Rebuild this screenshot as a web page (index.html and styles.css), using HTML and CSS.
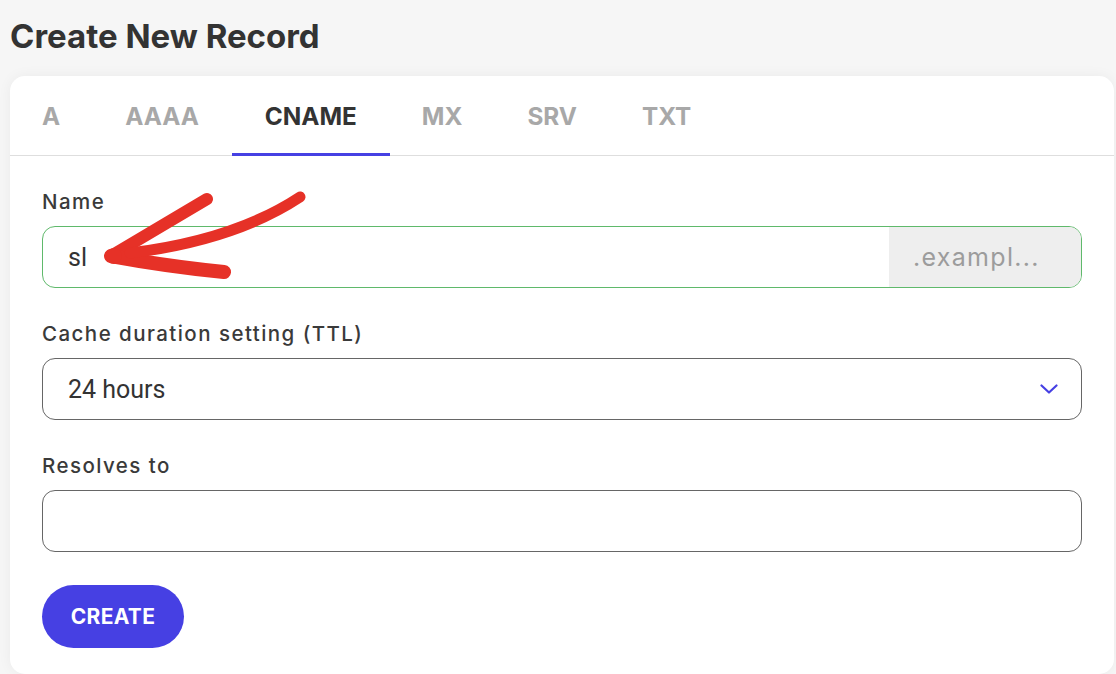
FILE: index.html
```html
<!DOCTYPE html>
<html lang="en">
<head>
<meta charset="utf-8">
<title>Create New Record</title>
<link rel="stylesheet" href="styles.css">
</head>
<body>
<main class="page">
  <h1 class="title">Create New Record</h1>
  <section class="card">
    <nav class="tabs">
      <div class="tab">A</div>
      <div class="tab">AAAA</div>
      <div class="tab active">CNAME</div>
      <div class="tab">MX</div>
      <div class="tab">SRV</div>
      <div class="tab">TXT</div>
    </nav>
    <form class="form">
      <div class="field">
        <label class="label">Name</label>
        <div class="control control-valid">
          <span class="value">sl</span>
          <span class="suffix">.exampl...</span>
        </div>
      </div>
      <div class="field">
        <label class="label">Cache duration setting (TTL)</label>
        <div class="control select">
          <span class="value">24 hours</span>
          <svg class="chevron" width="18" height="11" viewBox="0 0 18 11"><polyline points="1.5,1.5 9,8.5 16.5,1.5" fill="none" stroke="#4640e3" stroke-width="2.2" stroke-linecap="round" stroke-linejoin="round"/></svg>
        </div>
      </div>
      <div class="field">
        <label class="label">Resolves to</label>
        <div class="control"></div>
      </div>
      <button type="button" class="btn">CREATE</button>
    </form>
  </section>
  <svg class="arrow" width="1116" height="674" viewBox="0 0 1116 674">
    <path d="M207 199 L111 256" fill="none" stroke="#e63127" stroke-width="12" stroke-linecap="round"/>
    <path d="M111 256 Q 165 266 224 272" fill="none" stroke="#e63127" stroke-width="14" stroke-linecap="round"/>
    <path d="M300 197 Q 235 240 130 253" fill="none" stroke="#e63127" stroke-width="11" stroke-linecap="round"/>
    <circle cx="114" cy="256" r="8" fill="#e63127"/>
  </svg>
</main>
</body>
</html>
```
FILE: styles.css
```css
html, body {
  margin: 0;
  padding: 0;
  height: 100%;
  overflow: hidden;
  background: #f6f6f6;
}
.page {
  position: relative;
  padding: 16px 2px 0 10px;
  box-sizing: border-box;
  height: 674px;
}
.title {
  margin: 0 0 20px 0;
  font-family: Inter, "Open Sans", sans-serif;
  font-weight: 700;
  font-size: 33px;
  line-height: 40px;
  color: #333333;
}
.card {
  background: #ffffff;
  border-radius: 15px;
  box-shadow: 0 0 14px rgba(0, 0, 0, 0.05);
  padding-bottom: 26px;
}
.tabs {
  display: flex;
  border-bottom: 1px solid #dedede;
}
.tab {
  font-family: Inter, "Open Sans", sans-serif;
  font-weight: 700;
  font-size: 24.3px;
  line-height: 30px;
  color: #a8a8a8;
  padding: 25px 33px 22px 32px;
  border-bottom: 3px solid transparent;
  margin-bottom: -1px;
}
.tab.active {
  color: #333333;
  border-bottom-color: #4640e3;
  padding-left: 33px;
}
.form {
  display: flex;
  flex-direction: column;
  padding: 34px 32px 0 32px;
}
.field {
  display: flex;
  flex-direction: column;
  margin-bottom: 34px;
}
.label {
  font-family: Inter, "Open Sans", sans-serif;
  font-weight: 500;
  font-size: 20.5px;
  letter-spacing: 1.45px;
  line-height: 24px;
  color: #3a3a3a;
  margin-bottom: 12px;
}
.control {
  display: flex;
  align-items: center;
  height: 62px;
  box-sizing: border-box;
  border: 1px solid #666666;
  border-radius: 13px;
  overflow: hidden;
  background: #ffffff;
}
.control-valid {
  border-color: #5fb96b;
}
.value {
  flex: 1;
  padding-left: 25px;
  font-family: Roboto, "Liberation Sans", sans-serif;
  font-size: 25px;
  color: #333333;
}
.suffix {
  align-self: stretch;
  display: flex;
  align-items: center;
  width: 192px;
  box-sizing: border-box;
  padding-left: 24px;
  background: #eeeeee;
  font-family: Inter, "Open Sans", sans-serif;
  font-size: 25px;
  letter-spacing: 1.3px;
  color: #9c9c9c;
}
.select {
  padding-right: 23px;
}
.chevron {
  display: block;
  margin-top: 1px;
}
.btn {
  align-self: flex-start;
  width: 142px;
  height: 63px;
  margin-top: -1px;
  border: none;
  border-radius: 32px;
  background: #4640e3;
  color: #ffffff;
  font-family: Inter, "Open Sans", sans-serif;
  font-weight: 700;
  font-size: 21px;
  letter-spacing: 0.3px;
  padding: 0;
  cursor: pointer;
}
.arrow {
  position: absolute;
  left: 0;
  top: 0;
  pointer-events: none;
}
```
